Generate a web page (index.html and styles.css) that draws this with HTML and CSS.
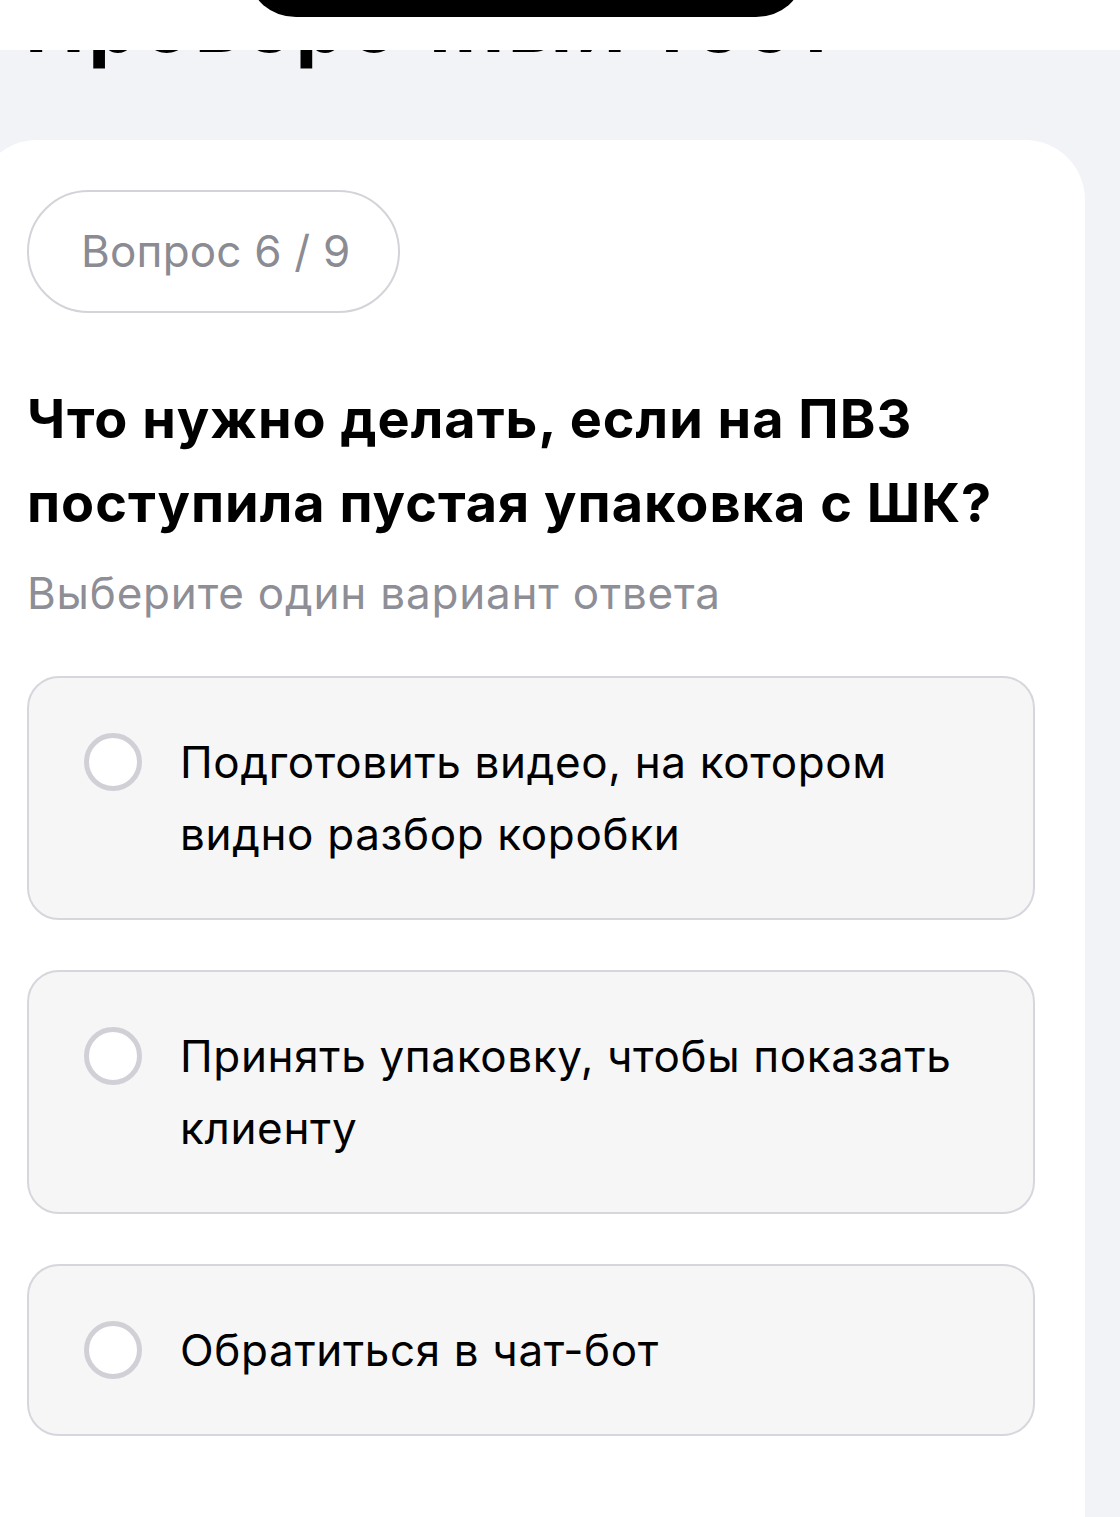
FILE: index.html
```html
<!DOCTYPE html>
<html>
<head>
<title>Проверочный тест</title>
<link rel="stylesheet" href="styles.css">
</head>
<body>
<header class="topbar">
  <div class="notch"></div>
</header>

<main class="page">
  <h1 class="page-title">Проверочный тест</h1>

  <section class="card">
    <div class="counter">Вопрос 6 / 9</div>

    <h2 class="question">Что нужно делать, если на ПВЗ поступила пустая упаковка с ШК?</h2>
    <p class="hint">Выберите один вариант ответа</p>

    <form class="options">
      <label class="option">
        <input type="radio" name="answer" value="1">
        <span class="radio"></span>
        <span class="option-text">Подготовить видео, на котором видно разбор коробки</span>
      </label>
      <label class="option">
        <input type="radio" name="answer" value="2">
        <span class="radio"></span>
        <span class="option-text">Принять упаковку, чтобы показать клиенту</span>
      </label>
      <label class="option">
        <input type="radio" name="answer" value="3">
        <span class="radio"></span>
        <span class="option-text">Обратиться в чат-бот</span>
      </label>
    </form>
  </section>
</main>
</body>
</html>
```

FILE: styles.css
```css
body {
  font-family: Inter, "Noto Sans", sans-serif;
  background-color: #f2f3f7;
  color: #000;
  margin: 0;
  padding: 0;
  overflow: hidden;
}

/* white bar with the phone notch, lies over the page title */
.topbar {
  position: fixed;
  top: 0;
  left: 0;
  right: 0;
  height: 50px;
  background-color: #fff;
  z-index: 10;
}

.notch {
  position: absolute;
  top: -32px;
  left: 250px;
  width: 552px;
  height: 49px;
  background-color: #000;
  border-radius: 0 0 46px 46px / 0 0 40px 40px;
}

.page {
  padding: 0 0 0 25px;
}

.page-title {
  margin: -17px 0 77px;
  font-size: 80px;
  line-height: 80px;
  font-weight: 700;
  letter-spacing: 3.5px;
}

.card {
  margin-left: -48px;
  width: 1008px;
  min-height: 1500px;
  padding: 50px 50px 80px;
  background-color: #fff;
  border-radius: 60px 60px 0 0;
}

.counter {
  display: inline-block;
  padding: 0 48px 0 52px;
  height: 119px;
  line-height: 119px;
  border: 2px solid #d3d3d9;
  border-radius: 62px;
  font-size: 44px;
  letter-spacing: 0.2px;
  color: #8b8b93;
}

.question {
  margin: 64px 0 20px;
  font-size: 54px;
  line-height: 84px;
  font-weight: 700;
  letter-spacing: 1px;
}

.hint {
  margin: 0 0 55px;
  font-size: 44px;
  line-height: 56px;
  letter-spacing: 0.8px;
  color: #8e8e96;
}

.options {
  display: flex;
  flex-direction: column;
  gap: 50px;
}

.option {
  display: flex;
  align-items: flex-start;
  gap: 38px;
  padding: 48px 50px 48px 55px;
  background-color: #f6f6f7;
  border: 2px solid #d6d6dc;
  border-radius: 32px;
  cursor: pointer;
}

.option input {
  display: none;
}

.radio {
  flex: none;
  width: 48px;
  height: 48px;
  margin-top: 7px;
  border: 5px solid #d0d0d6;
  border-radius: 50%;
  background-color: #fff;
}

.option-text {
  font-size: 44px;
  line-height: 72px;
  letter-spacing: 0.65px;
}
```
